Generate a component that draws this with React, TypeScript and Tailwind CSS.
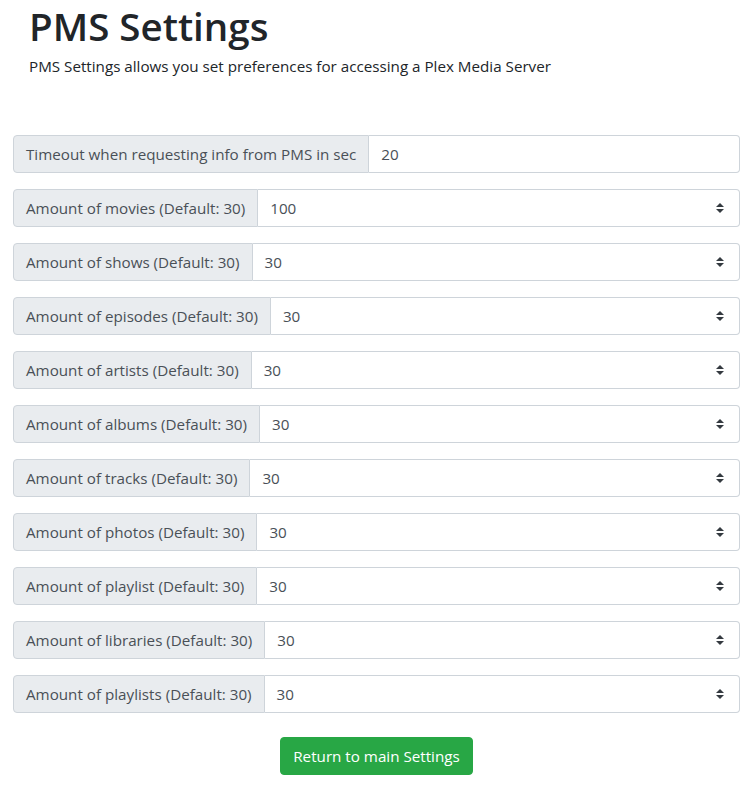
import React from "react";

const rows = [
  { label: "Amount of movies (Default: 30)", value: "100" },
  { label: "Amount of shows (Default: 30)", value: "30" },
  { label: "Amount of episodes (Default: 30)", value: "30" },
  { label: "Amount of artists (Default: 30)", value: "30" },
  { label: "Amount of albums (Default: 30)", value: "30" },
  { label: "Amount of tracks (Default: 30)", value: "30" },
  { label: "Amount of photos (Default: 30)", value: "30" },
  { label: "Amount of playlist (Default: 30)", value: "30" },
  { label: "Amount of libraries (Default: 30)", value: "30" },
  { label: "Amount of playlists (Default: 30)", value: "30" },
];

const Arrows = () => (
  <svg width="8" height="10" viewBox="0 0 8 10" className="shrink-0">
    <path d="M4 0 L8 4 H0 Z" fill="#343a40" />
    <path d="M0 6 H8 L4 10 Z" fill="#343a40" />
  </svg>
);

const App = () => {
  return (
    <div className="w-[753px] min-h-[788px] bg-white font-['Open_Sans',sans-serif] text-[#212529]">
      <div className="px-[29px] pt-0">
        <h1 className="text-[38.5px] leading-[52px] font-semibold">PMS Settings</h1>
        <p className="mt-[3px] text-[15.2px] leading-[22px]">
          PMS Settings allows you set preferences for accessing a Plex Media Server
        </p>
      </div>
      <form className="px-[13px] pt-[58px]">
        <div className="flex h-[38px] mb-4 text-[15.2px] text-[#495057]">
          <div className="flex items-center px-3 bg-[#e9ecef] border border-[#ced4da] rounded-l">
            Timeout when requesting info from PMS in sec
          </div>
          <input
            type="text"
            defaultValue="20"
            className="flex-1 min-w-0 px-3 border border-l-0 border-[#ced4da] rounded-r outline-none text-[#495057]"
          />
        </div>
        {rows.map((row) => (
          <div key={row.label} className="flex h-[38px] mb-4 text-[15.2px] text-[#495057]">
            <div className="flex items-center px-3 bg-[#e9ecef] border border-[#ced4da] rounded-l whitespace-nowrap">
              {row.label}
            </div>
            <div className="flex flex-1 items-center justify-between pl-3 pr-[15px] border border-l-0 border-[#ced4da] rounded-r">
              <span>{row.value}</span>
              <Arrows />
            </div>
          </div>
        ))}
        <div className="flex justify-center pt-2">
          <button
            type="button"
            className="h-[38px] px-3 bg-[#28a745] text-white text-[15.2px] rounded border border-[#28a745]"
          >
            Return to main Settings
          </button>
        </div>
      </form>
    </div>
  );
};

export default App;
